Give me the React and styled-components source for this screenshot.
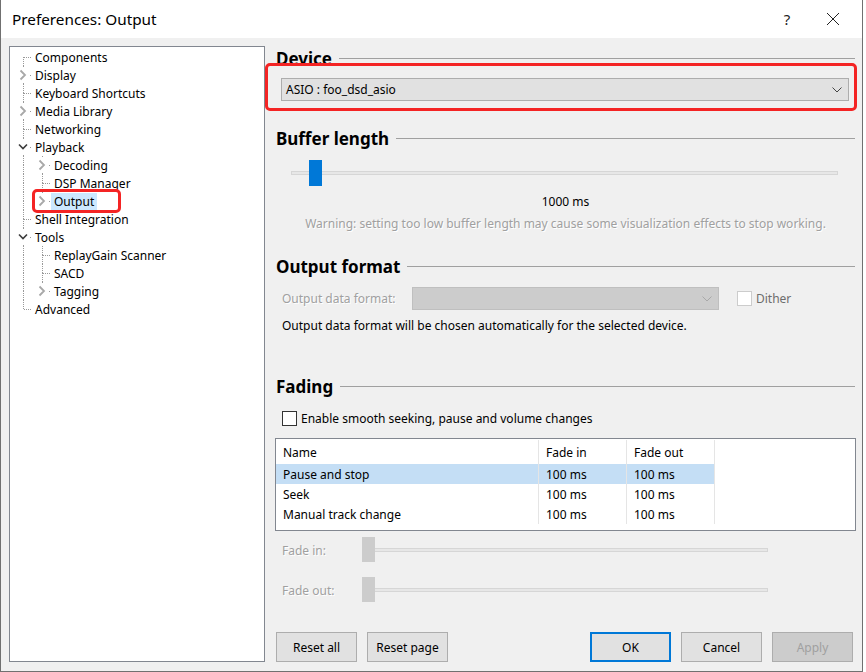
import React from "react";
import styled, { createGlobalStyle } from "styled-components";

const GlobalStyle = createGlobalStyle`
    body {
        margin: 0;
        background: #ffffff;
        font-family: "Noto Sans", "Liberation Sans", sans-serif;
        font-size: 12px;
        color: #000;
    }
`;

const Dialog = styled.div`
    width: 863px;
    height: 672px;
    box-sizing: border-box;
    border: 1px solid #707070;
    border-top: none;
    background: #f0f0f0;
    display: flex;
    flex-direction: column;
`;

const TitleBar = styled.div`
    height: 38px;
    flex: none;
    background: #ffffff;
    display: flex;
    align-items: center;
    padding-left: 11px;
`;

const Title = styled.div`
    flex: 1;
    font-size: 15.3px;
    color: #000;
`;

const Caption = styled.div`
    width: 46px;
    height: 38px;
    display: flex;
    align-items: center;
    justify-content: center;
    font-size: 15px;
    color: #222;
`;

const Body = styled.div`
    flex: 1;
    display: flex;
    padding: 8px 0 0 8px;
`;

const TreePanel = styled.div`
    width: 256px;
    height: 616px;
    box-sizing: border-box;
    border: 1px solid #828790;
    background: #ffffff;
    padding-top: 1px;
    flex: none;
`;

const TreeRow = styled.div`
    position: relative;
    height: 18px;
    display: flex;
    align-items: center;
    padding-left: 3px;
`;

const TreeLabel = styled.span`
    height: 17px;
    line-height: 17px;
    padding: 0 3px;
    white-space: nowrap;
    background: ${(p) => (p.$selected ? "#cce8ff" : "transparent")};
`;

const Mark = styled.div`
    position: absolute;
    border: 3px solid #f42424;
    border-radius: 5px;
    box-sizing: border-box;
    left: ${(p) => p.$left}px;
    top: ${(p) => p.$top}px;
    width: ${(p) => p.$width}px;
    height: ${(p) => p.$height}px;
    pointer-events: none;
`;

const Right = styled.div`
    flex: 1;
    display: flex;
    flex-direction: column;
    padding: 2px 7px 0 11px;
`;

const SectionTitle = styled.div`
    height: 20px;
    display: flex;
    align-items: center;
    font-size: 17px;
    font-weight: bold;
    margin-top: ${(p) => p.$top || 0}px;

    &::after {
        content: "";
        flex: 1;
        height: 1px;
        background: #a0a0a0;
        margin-left: 7px;
    }
`;

const DeviceWrap = styled.div`
    position: relative;
    margin: 10px 6px 0 5px;
`;

const Combo = styled.div`
    height: 23px;
    box-sizing: border-box;
    border: 1px solid ${(p) => (p.$disabled ? "#bfbfbf" : "#adadad")};
    background: ${(p) => (p.$disabled ? "#cccccc" : "#e1e1e1")};
    display: flex;
    align-items: center;
    padding: 0 6px 0 4px;
    width: ${(p) => (p.$width ? p.$width + "px" : "auto")};
    flex: none;
`;

const ComboText = styled.span`
    flex: 1;
`;

const SliderBox = styled.div`
    position: relative;
    height: 26px;
    margin: ${(p) => p.$margin};
    display: flex;
    align-items: center;
    flex: ${(p) => (p.$grow ? 1 : "none")};
`;

const Track = styled.div`
    flex: 1;
    height: 4px;
    box-sizing: border-box;
    border: 1px solid #d6d6d6;
    background: #e7e7e7;
`;

const Thumb = styled.div`
    position: absolute;
    top: 0;
    left: ${(p) => p.$left}px;
    width: ${(p) => p.$w}px;
    height: ${(p) => p.$h}px;
    background: ${(p) => (p.$disabled ? "#cccccc" : "#0078d7")};
`;

const CenterText = styled.div`
    text-align: center;
    height: 16px;
    line-height: 16px;
    margin-top: ${(p) => p.$top}px;
    color: ${(p) => (p.$muted ? "#a0a0a0" : "#000")};
    text-shadow: ${(p) => (p.$muted ? "1px 1px 0 #fff" : "none")};
    white-space: nowrap;
`;

const FormatRow = styled.div`
    display: flex;
    align-items: center;
    margin: 11px 0 0 6px;
    height: 23px;
`;

const Muted = styled.span`
    color: #a0a0a0;
    text-shadow: 1px 1px 0 #fff;
    white-space: nowrap;
    width: ${(p) => (p.$width ? p.$width + "px" : "auto")};
    flex: none;
`;

const CheckLabel = styled.label`
    display: flex;
    align-items: center;
    gap: 4px;
    color: ${(p) => (p.$disabled ? "#6d6d6d" : "#000")};
    margin-left: ${(p) => p.$left || 0}px;
    white-space: nowrap;
`;

const Box = styled.span`
    width: 15px;
    height: 15px;
    box-sizing: border-box;
    border: 1px solid ${(p) => (p.$disabled ? "#cccccc" : "#333333")};
    background: #ffffff;
    flex: none;
`;

const InfoText = styled.div`
    margin: 8px 0 0 6px;
    height: 16px;
    line-height: 16px;
    white-space: nowrap;
`;

const CheckRow = styled.div`
    margin: 14px 0 0 6px;
    height: 16px;
    display: flex;
    align-items: center;
`;

const Table = styled.div`
    margin: 12px -1px 0 -1px;
    height: 93px;
    box-sizing: border-box;
    border: 1px solid #828790;
    background: #ffffff;
    padding-top: 1px;
`;

const TRow = styled.div`
    display: grid;
    grid-template-columns: 263px 88px 88px 1fr;
    height: ${(p) => (p.$head ? 24 : 20)}px;
`;

const TCell = styled.div`
    padding-left: 7px;
    display: flex;
    align-items: center;
    border-right: ${(p) => (p.$last ? "none" : "1px solid #e5e5e5")};
    background: ${(p) => (p.$sel ? "#c4def5" : "transparent")};
    white-space: nowrap;
`;

const FadeRow = styled.div`
    display: flex;
    align-items: center;
    margin: ${(p) => p.$top}px 87px 0 6px;
`;

const ButtonRow = styled.div`
    display: flex;
    gap: 10px;
    margin: 29px 2px 0 0;
`;

const Spacer = styled.div`
    flex: 1;
`;

const Button = styled.div`
    width: 81px;
    height: 30px;
    box-sizing: border-box;
    display: flex;
    align-items: center;
    justify-content: center;
    border: ${(p) => (p.$default ? "2px solid #0078d7" : "1px solid #adadad")};
    background: ${(p) => (p.$disabled ? "#cccccc" : "#e1e1e1")};
    color: ${(p) => (p.$disabled ? "#a0a0a0" : "#000")};
`;

const tree = [
    { label: "Components", depth: 0 },
    { label: "Display", depth: 0, toggle: "closed" },
    { label: "Keyboard Shortcuts", depth: 0 },
    { label: "Media Library", depth: 0, toggle: "closed" },
    { label: "Networking", depth: 0 },
    { label: "Playback", depth: 0, toggle: "open" },
    { label: "Decoding", depth: 1, toggle: "closed" },
    { label: "DSP Manager", depth: 1 },
    { label: "Output", depth: 1, toggle: "closed", selected: true },
    { label: "Shell Integration", depth: 0 },
    { label: "Tools", depth: 0, toggle: "open" },
    { label: "ReplayGain Scanner", depth: 1 },
    { label: "SACD", depth: 1 },
    { label: "Tagging", depth: 1, toggle: "closed" },
    { label: "Advanced", depth: 0 },
];

const hasNext = (i) => {
    const d = tree[i].depth;
    for (let j = i + 1; j < tree.length; j++) {
        if (tree[j].depth < d) return false;
        if (tree[j].depth === d) return true;
    }
    return false;
};

const ancestorContinues = (i, level) => {
    for (let j = i - 1; j >= 0; j--) {
        if (tree[j].depth === level) return hasNext(j);
    }
    return false;
};

const Guide = ({ up, down, branch, toggle }) => (
    <svg width="19" height="18" style={{ flex: "none", display: "block" }}>
        <g stroke="#999" strokeWidth="1" strokeDasharray="1 1">
            {up && <line x1="10.5" y1="0" x2="10.5" y2="9" />}
            {down && <line x1="10.5" y1="9" x2="10.5" y2="18" />}
            {branch && <line x1="11" y1="9.5" x2="19" y2="9.5" />}
        </g>
        {toggle && <rect x="4" y="2" width="12" height="14" fill="#fff" />}
        {toggle === "closed" && (
            <polyline points="7.5,4.5 12,9 7.5,13.5" fill="none" stroke="#a8a8a8" strokeWidth="1.8" />
        )}
        {toggle === "open" && (
            <polyline points="6,6.5 10,10.5 14,6.5" fill="none" stroke="#3c3c3c" strokeWidth="1.6" />
        )}
    </svg>
);

const Chevron = ({ color }) => (
    <svg width="10" height="6" viewBox="0 0 10 6">
        <polyline points="0.5,0.5 5,5 9.5,0.5" fill="none" stroke={color} strokeWidth="1" />
    </svg>
);

const Tree = () => (
    <TreePanel>
        {tree.map((item, i) => {
            const guides = [];
            for (let l = 0; l < item.depth; l++) {
                const c = ancestorContinues(i, l);
                guides.push(<Guide key={l} up={c} down={c} />);
            }
            guides.push(
                <Guide
                    key="own"
                    up={i !== 0}
                    down={hasNext(i)}
                    branch
                    toggle={item.toggle}
                />
            );
            return (
                <TreeRow key={item.label}>
                    {guides}
                    <TreeLabel $selected={item.selected}>{item.label}</TreeLabel>
                    {item.selected && <Mark $left={22} $top={-3} $width={89} $height={24} />}
                </TreeRow>
            );
        })}
    </TreePanel>
);

const fades = [
    ["Pause and stop", "100 ms", "100 ms", true],
    ["Seek", "100 ms", "100 ms"],
    ["Manual track change", "100 ms", "100 ms"],
];

const App = () => {
    return (
        <Dialog>
            <GlobalStyle />
            <TitleBar>
                <Title>Preferences: Output</Title>
                <Caption>?</Caption>
                <Caption>
                    <svg width="14" height="14">
                        <path d="M1 1 L13 13 M13 1 L1 13" stroke="#222" strokeWidth="1" />
                    </svg>
                </Caption>
                <div style={{ width: 6 }} />
            </TitleBar>
            <Body>
                <Tree />
                <Right>
                    <SectionTitle>Device</SectionTitle>
                    <DeviceWrap>
                        <Combo>
                            <ComboText>ASIO : foo_dsd_asio</ComboText>
                            <Chevron color="#444" />
                        </Combo>
                        <Mark $left={-16} $top={-15} $width={592} $height={48} />
                    </DeviceWrap>

                    <SectionTitle $top={27}>Buffer length</SectionTitle>
                    <SliderBox $margin="12px 17px 0 15px">
                        <Track />
                        <Thumb $left={18} $w={13} $h={26} />
                    </SliderBox>
                    <CenterText $top={8}>1000 ms</CenterText>
                    <CenterText $top={6} $muted>
                        Warning: setting too low buffer length may cause some visualization effects to stop working.
                    </CenterText>

                    <SectionTitle $top={24}>Output format</SectionTitle>
                    <FormatRow>
                        <Muted $width={130}>Output data format:</Muted>
                        <Combo $disabled $width={307}>
                            <ComboText />
                            <Chevron color="#a8a8a8" />
                        </Combo>
                        <CheckLabel $disabled $left={18}>
                            <Box $disabled />
                            Dither
                        </CheckLabel>
                    </FormatRow>
                    <InfoText>Output data format will be chosen automatically for the selected device.</InfoText>

                    <SectionTitle $top={42}>Fading</SectionTitle>
                    <CheckRow>
                        <CheckLabel>
                            <Box />
                            Enable smooth seeking, pause and volume changes
                        </CheckLabel>
                    </CheckRow>
                    <Table>
                        <TRow $head>
                            <TCell>Name</TCell>
                            <TCell>Fade in</TCell>
                            <TCell>Fade out</TCell>
                            <TCell $last />
                        </TRow>
                        {fades.map(([name, fin, fout, sel]) => (
                            <TRow key={name}>
                                <TCell $sel={sel}>{name}</TCell>
                                <TCell $sel={sel}>{fin}</TCell>
                                <TCell $sel={sel}>{fout}</TCell>
                                <TCell $last />
                            </TRow>
                        ))}
                    </Table>

                    <FadeRow $top={6}>
                        <Muted $width={80}>Fade in:</Muted>
                        <SliderBox $grow $margin="0">
                            <Track />
                            <Thumb $disabled $left={0} $w={13} $h={25} />
                        </SliderBox>
                    </FadeRow>
                    <FadeRow $top={14}>
                        <Muted $width={80}>Fade out:</Muted>
                        <SliderBox $grow $margin="0">
                            <Track />
                            <Thumb $disabled $left={0} $w={13} $h={25} />
                        </SliderBox>
                    </FadeRow>

                    <ButtonRow>
                        <Button>Reset all</Button>
                        <Button>Reset page</Button>
                        <Spacer />
                        <Button $default>OK</Button>
                        <Button>Cancel</Button>
                        <Button $disabled>Apply</Button>
                    </ButtonRow>
                </Right>
            </Body>
        </Dialog>
    );
};

export default App;
